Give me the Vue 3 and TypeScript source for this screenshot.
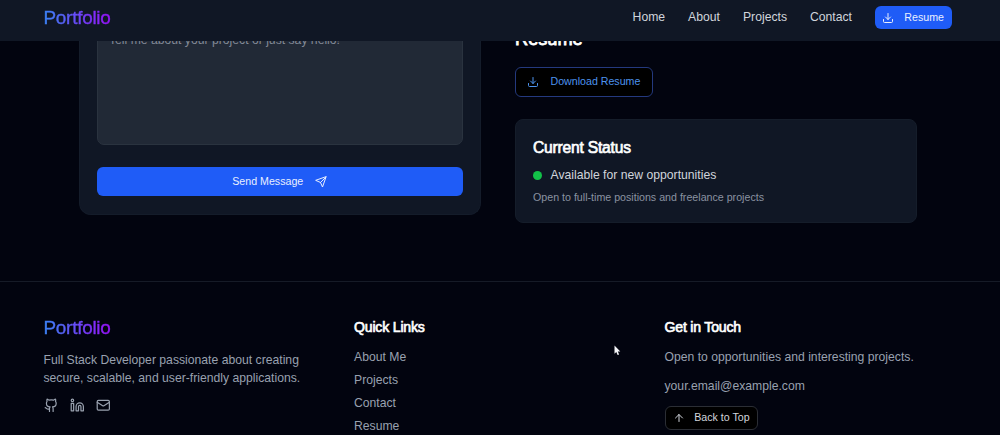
<script setup lang="ts">
interface NavLink {
  label: string
  href: string
}

const navLinks: NavLink[] = [
  { label: 'Home', href: '#home' },
  { label: 'About', href: '#about' },
  { label: 'Projects', href: '#projects' },
  { label: 'Contact', href: '#contact' },
]

const quickLinks: NavLink[] = [
  { label: 'About Me', href: '#about' },
  { label: 'Projects', href: '#projects' },
  { label: 'Contact', href: '#contact' },
  { label: 'Resume', href: '#resume' },
]
</script>

<template>
  <div class="page">
    <header class="nav">
      <span class="logo">Portfolio</span>
      <nav class="nav-links">
        <a v-for="link in navLinks" :key="link.label" :href="link.href">{{ link.label }}</a>
        <button class="nav-resume" type="button">
          <svg class="icon" viewBox="0 0 24 24">
            <path d="M21 15v4a2 2 0 0 1-2 2H5a2 2 0 0 1-2-2v-4M7 10l5 5 5-5M12 15V3" />
          </svg>
          Resume
        </button>
      </nav>
    </header>

    <main class="contact">
      <form class="form-card" @submit.prevent>
        <textarea class="message" placeholder="Tell me about your project or just say hello!"></textarea>
        <button class="send" type="submit">
          Send Message
          <svg class="icon" viewBox="0 0 24 24">
            <path d="M22 2 11 13M22 2l-7 20-4-9-9-4Z" />
          </svg>
        </button>
      </form>

      <section class="side">
        <h3 class="resume-title">Resume</h3>
        <button class="download" type="button">
          <svg class="icon" viewBox="0 0 24 24">
            <path d="M21 15v4a2 2 0 0 1-2 2H5a2 2 0 0 1-2-2v-4M7 10l5 5 5-5M12 15V3" />
          </svg>
          Download Resume
        </button>
        <div class="status">
          <h3>Current Status</h3>
          <p class="available"><span class="dot"></span>Available for new opportunities</p>
          <p class="note">Open to full-time positions and freelance projects</p>
        </div>
      </section>
    </main>

    <footer class="footer">
      <section class="about">
        <span class="logo">Portfolio</span>
        <p>Full Stack Developer passionate about creating<br />secure, scalable, and user-friendly applications.</p>
        <div class="social">
          <svg class="icon" viewBox="0 0 24 24">
            <path d="M15 22v-4a4.8 4.8 0 0 0-1-3.500c3 0 6-2 6-5.500.08-1.250-.27-2.480-1-3.500.28-1.150.28-2.350 0-3.500 0 0-1 0-3 1.500-2.640-.5-5.360-.5-8 0C6 2 5 2 5 2c-.3 1.150-.3 2.350 0 3.500A5.403 5.403 0 0 0 4 9c0 3.500 3 5.500 6 5.500-.39.49-.68 1.050-.85 1.650-.17.6-.22 1.230-.15 1.850v4M9 18c-4.510 2-5-2-7-2" />
          </svg>
          <svg class="icon" viewBox="0 0 24 24">
            <path d="M16 8a6 6 0 0 1 6 6v7h-4v-7a2 2 0 0 0-4 0v7h-4v-7a6 6 0 0 1 6-6Z" />
            <rect x="2" y="9" width="4" height="12" />
            <circle cx="4" cy="4" r="2" />
          </svg>
          <svg class="icon" viewBox="0 0 24 24">
            <rect x="2" y="4" width="20" height="16" rx="2" />
            <path d="m22 7-8.970 5.700a1.940 1.940 0 0 1-2.060 0L2 7" />
          </svg>
        </div>
      </section>

      <section class="quick">
        <h4>Quick Links</h4>
        <ul>
          <li v-for="link in quickLinks" :key="link.label">
            <a :href="link.href">{{ link.label }}</a>
          </li>
        </ul>
      </section>

      <section class="touch">
        <h4>Get in Touch</h4>
        <p>Open to opportunities and interesting projects.</p>
        <p class="email">your.email@example.com</p>
        <button class="top" type="button">
          <svg class="icon" viewBox="0 0 24 24">
            <path d="m5 12 7-7 7 7M12 19V5" />
          </svg>
          Back to Top
        </button>
      </section>
    </footer>

    <svg class="cursor" viewBox="0 0 7 11">
      <path d="M.5.5v8.200l1.800-1.600 1.300 3 1.500-.7-1.300-2.800h2.500Z" />
    </svg>
  </div>
</template>

<style>
body {
  margin: 0;
  background: #02040f;
}
</style>

<style scoped>
.page {
  position: relative;
  width: 1000px;
  height: 435px;
  overflow: hidden;
  background: #02040f;
  color: #99a1af;
  font: 12.2px/17.5px "Liberation Sans", Arial, sans-serif;
}
.page * {
  box-sizing: border-box;
}
h3,
h4,
p,
ul {
  margin: 0;
  padding: 0;
}
h3,
h4 {
  font-weight: 400;
  color: #fff;
  -webkit-text-stroke: 0.65px #fff;
}
ul {
  list-style: none;
}
a {
  color: inherit;
  text-decoration: none;
}
button {
  display: flex;
  align-items: center;
  font: 10.65px/15px "Liberation Sans", Arial, sans-serif;
  border: 0;
  padding: 0;
  white-space: nowrap;
}
.icon {
  flex: none;
  width: 12px;
  height: 12px;
  fill: none;
  stroke: currentColor;
  stroke-width: 2;
  stroke-linecap: round;
  stroke-linejoin: round;
}
.logo {
  display: block;
  width: max-content;
  font-size: 18.900px;
  line-height: 22px;
  letter-spacing: -0.25px;
  color: transparent;
  -webkit-text-stroke: 0.4px transparent;
  background: linear-gradient(90deg, #3b82f6, #9810fa);
  background-clip: text;
  -webkit-background-clip: text;
}
.nav {
  position: absolute;
  z-index: 2;
  top: 0;
  left: 0;
  width: 100%;
  height: 41px;
  padding: 0 48px 6px 43.500px;
  display: flex;
  align-items: center;
  justify-content: space-between;
  background: #101725;
}
.nav-links {
  display: flex;
  align-items: center;
  gap: 23px;
  color: #d1d5dc;
}
.nav-resume {
  width: 77px;
  height: 23px;
  padding-left: 7px;
  gap: 10.300px;
  border-radius: 6px;
  background: #1f5cf7;
  color: #e9effe;
}
.contact {
  display: grid;
  grid-template-columns: 402px 402px;
  column-gap: 34px;
  align-items: start;
  height: 281px;
  padding-left: 79px;
}
.form-card {
  height: 215px;
  padding: 29px 17px 0;
  background: #101725;
  border: 1px solid #141c2a;
  border-top: 0;
  border-radius: 0 0 12px 12px;
}
.message {
  display: block;
  width: 366px;
  height: 116px;
  padding: 2px 11px;
  resize: none;
  background: #212936;
  border: 1px solid #2a333f;
  border-radius: 0 0 7px 7px;
  outline: 0;
  font: inherit;
}
.message::placeholder {
  color: #838a96;
}
.send {
  width: 366px;
  height: 29px;
  margin-top: 22px;
  padding-right: 1px;
  justify-content: center;
  gap: 11.500px;
  border-radius: 6px;
  background: #1f5cf7;
  color: #e9effe;
}
.side {
  padding-top: 27px;
}
.resume-title {
  font-size: 18.200px;
  line-height: 24px;
  -webkit-text-stroke-width: 0.8px;
}
.download {
  width: 138px;
  height: 30px;
  margin-top: 16px;
  padding: 0 0 1px 11.200px;
  gap: 11.300px;
  border: 1px solid #24397e;
  border-radius: 6px;
  background: #000;
  color: #4d93ee;
}
.status {
  height: 104px;
  margin-top: 22px;
  padding: 18px 17px 0;
  border: 1px solid #151d2a;
  border-radius: 8px;
  background: #101725;
}
.status h3 {
  font-size: 15.600px;
  line-height: 20px;
  letter-spacing: -0.2px;
}
.available {
  display: flex;
  align-items: center;
  gap: 8.500px;
  margin-top: 9px;
  color: #d1d5dc;
}
.dot {
  width: 9px;
  height: 9px;
  border-radius: 50%;
  background: #12c148;
}
.note {
  margin-top: 5px;
  font-size: 10.670px;
  line-height: 15px;
  color: #8a92a1;
}
.footer {
  display: grid;
  grid-template-columns: repeat(3, 275.500px);
  column-gap: 35px;
  border-top: 1px solid #161b27;
  padding: 35px 0 0 43.500px;
}
.about p {
  margin-top: 13px;
  white-space: nowrap;
}
.social {
  display: flex;
  gap: 11.700px;
  margin-top: 11px;
}
.social .icon {
  width: 14.600px;
  height: 14.600px;
}
.footer h4 {
  padding-top: 1px;
  font-size: 14.100px;
  line-height: 18px;
  letter-spacing: -0.2px;
}
.quick ul {
  margin-top: 13px;
}
.quick li {
  height: 23.100px;
}
.touch p {
  margin-top: 13px;
}
.touch .email {
  margin-top: 11px;
}
.touch .top {
  width: 93.500px;
  height: 24px;
  margin-top: 11px;
  padding: 0 0 1px 7px;
  gap: 9.700px;
  border: 1px solid #2b2e35;
  border-radius: 6px;
  background: #000;
  color: #d1d5dc;
}
.cursor {
  position: absolute;
  left: 614px;
  top: 345px;
  width: 7px;
  height: 11px;
  fill: #f4f5f8;
}
</style>
